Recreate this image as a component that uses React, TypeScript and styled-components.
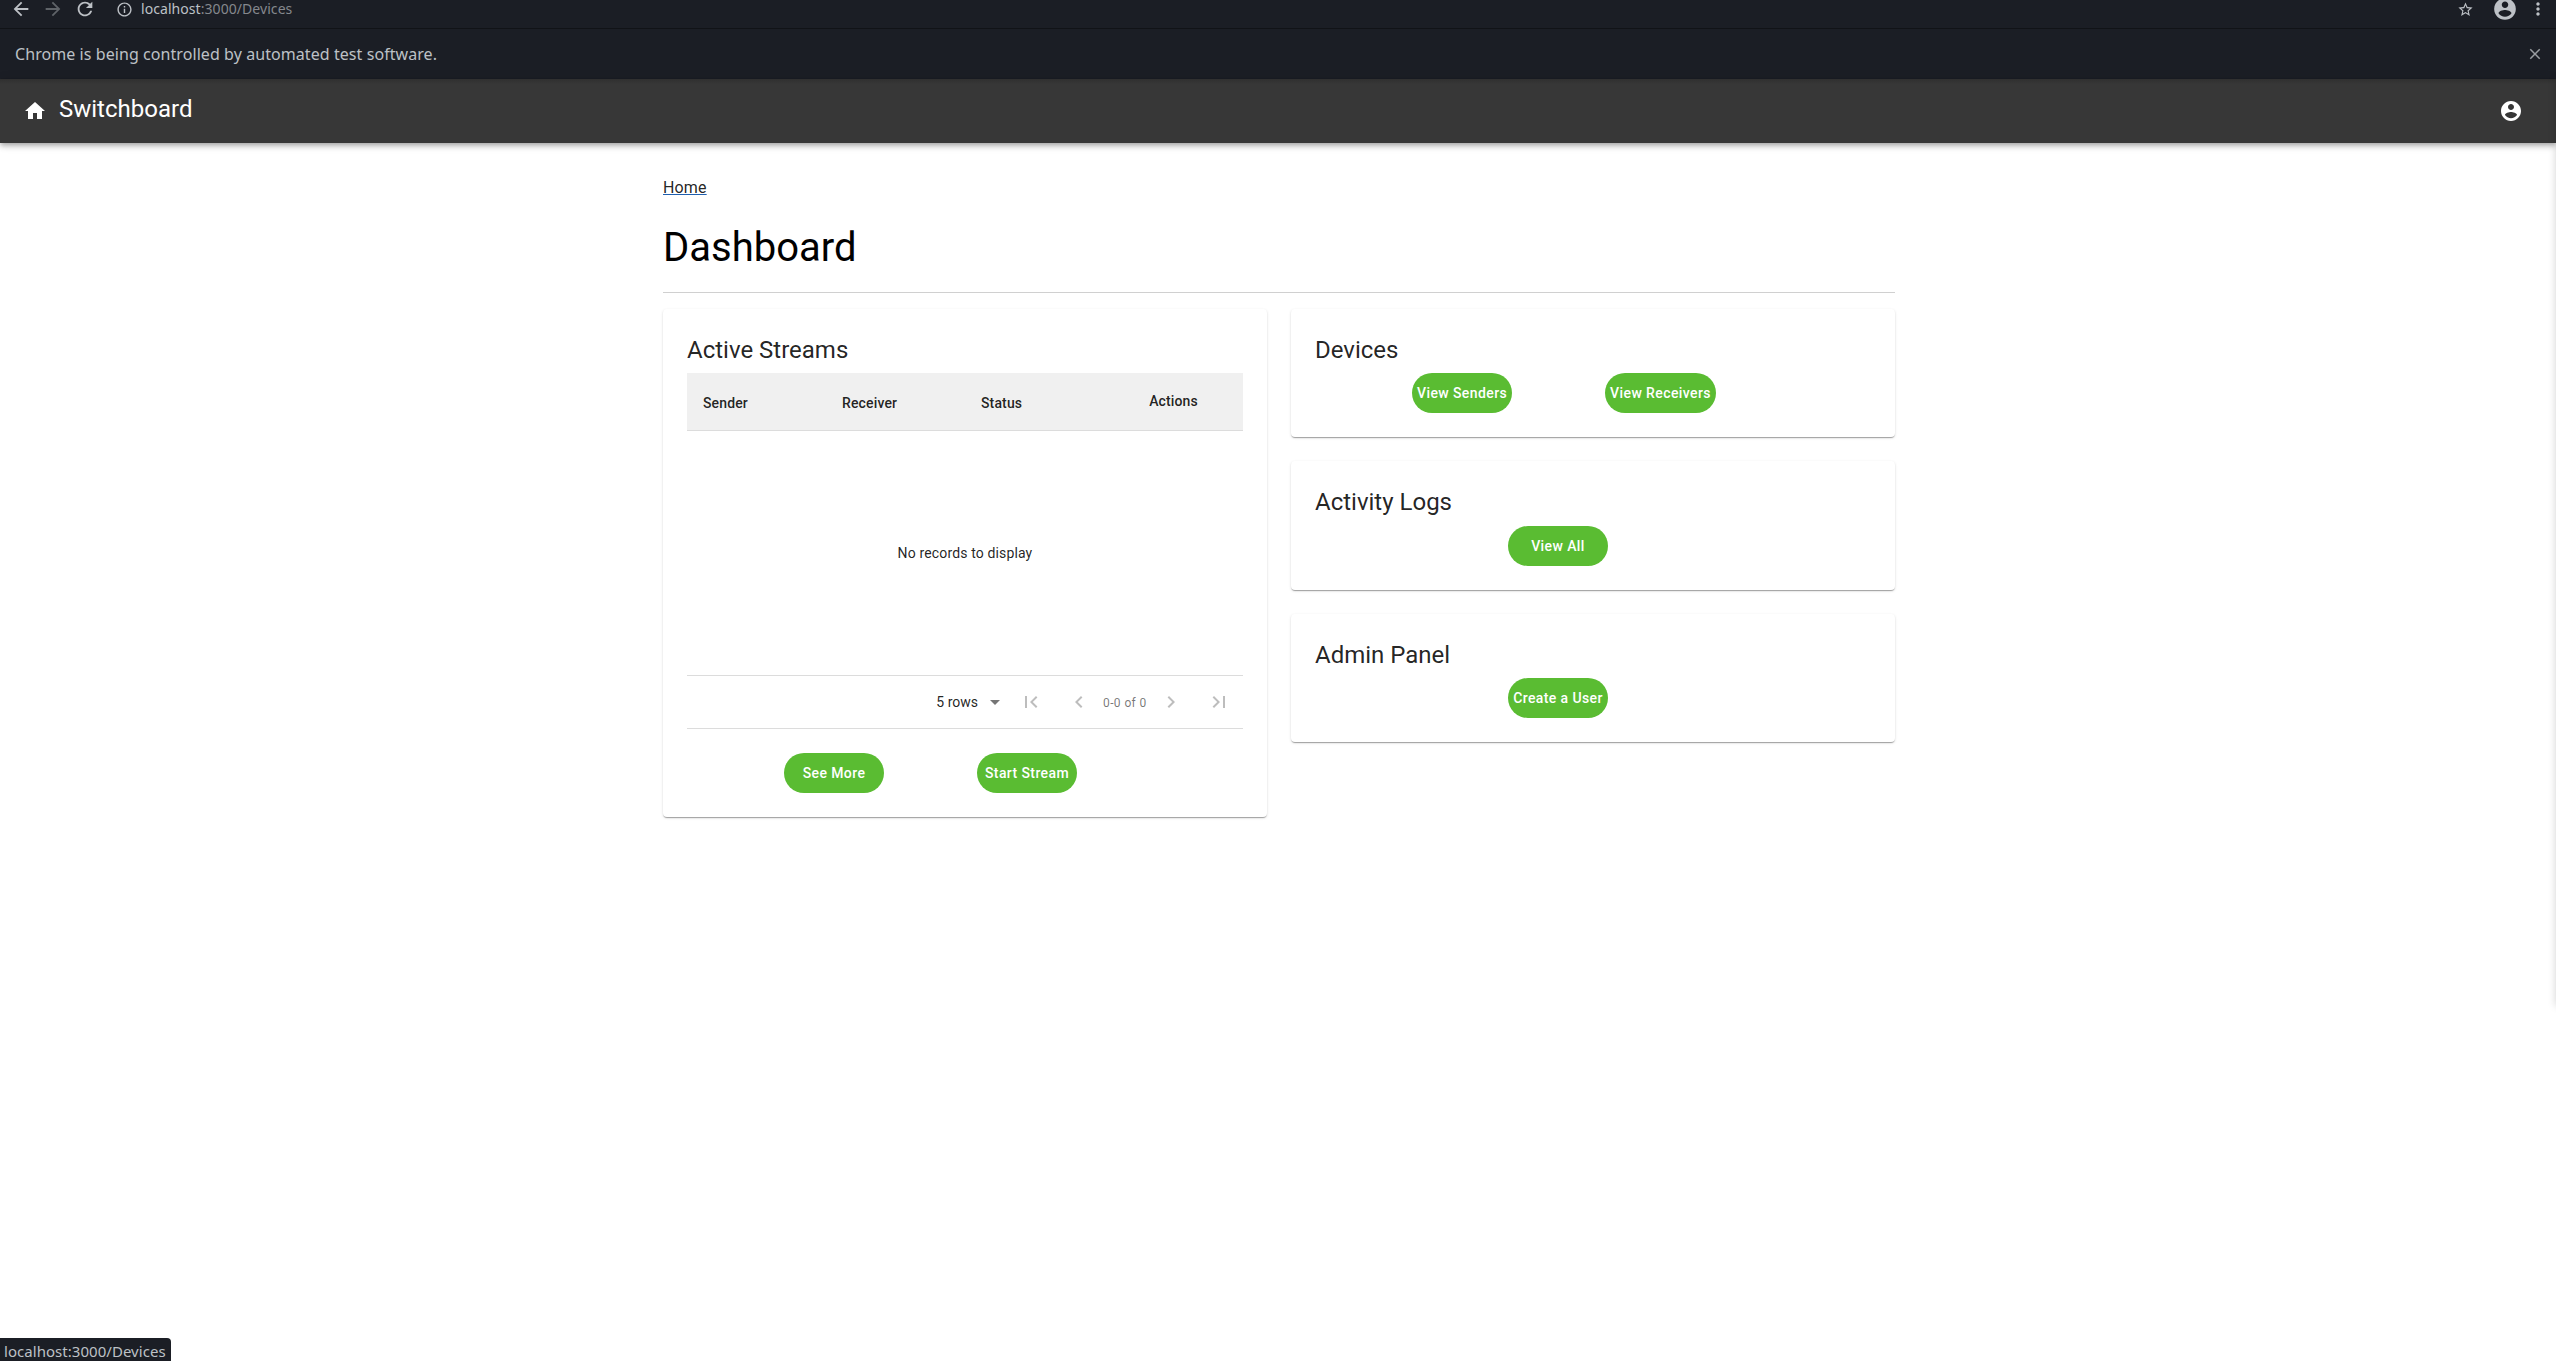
import React from 'react';
import styled, { createGlobalStyle } from 'styled-components';

const GlobalStyle = createGlobalStyle`
  *, *::before, *::after { box-sizing: border-box; }
  html, body { margin: 0; padding: 0; background: #fff; }
  body { font-family: Roboto, "Liberation Sans", sans-serif; overflow: hidden; }
`;

const Window = styled.div`
  position: relative;
  display: flex;
  flex-direction: column;
  height: 1361px;
  overflow: hidden;
`;

const Toolbar = styled.div`
  display: flex;
  align-items: center;
  height: 28px;
  padding: 0 13px 10px 10px;
  background: #1b1e25;
  color: #bdc1c6;
  font-family: "Noto Sans", sans-serif;
`;

const ToolbarIcon = styled.svg<{ $size: number; $gap?: number; $dim?: boolean }>`
  flex: none;
  width: ${p => p.$size}px;
  height: ${p => p.$size}px;
  margin-right: ${p => p.$gap ?? 0}px;
  fill: ${p => (p.$dim ? '#5f6368' : 'currentColor')};
  overflow: visible;
`;

const Url = styled.div`
  flex: 1;
  font-size: 14px;
  line-height: 18px;
  letter-spacing: 0.06px;
  color: #85888d;
`;

const Host = styled.span`
  color: #bdc1c6;
`;

const InfoBar = styled.div`
  display: flex;
  align-items: center;
  justify-content: space-between;
  height: 51px;
  padding: 0 12px 0 15px;
  border-top: 1px solid #111317;
  background: #1b1e25;
  color: #bdc1c6;
  font: 16px/22px "Noto Sans", sans-serif;
  letter-spacing: 0.07px;
`;

const CloseIcon = styled.svg`
  width: 18px;
  height: 18px;
  fill: #9a9da1;
`;

const AppBar = styled.header`
  position: relative;
  display: flex;
  align-items: center;
  height: 64px;
  flex: none;
  padding: 0 33px 0 23px;
  background: linear-gradient(#2f2f2f, #373737 5px);
  color: #fff;
  box-shadow: 0 2px 4px -1px rgba(0, 0, 0, 0.2), 0 4px 5px 0 rgba(0, 0, 0, 0.14),
    0 1px 10px 0 rgba(0, 0, 0, 0.12);
`;

const Brand = styled.div`
  flex: 1;
  padding: 0 0 4px 12px;
  font-size: 24px;
  line-height: 32px;
`;

const Icon = styled.svg<{ $color?: string }>`
  flex: none;
  display: block;
  width: 24px;
  height: 24px;
  fill: ${p => p.$color ?? 'currentColor'};
`;

const Container = styled.main`
  width: 1232px;
  margin: 0 0 0 663px;
  padding-top: 33px;
`;

const Breadcrumb = styled.a`
  display: block;
  width: max-content;
  font-size: 16px;
  line-height: 24px;
  letter-spacing: 0.15px;
  color: rgba(0, 0, 0, 0.87);
  text-decoration: underline;
  text-decoration-color: #1f5fae;
`;

const PageTitle = styled.h1`
  height: 93px;
  margin: 0 0 16px;
  padding-top: 24px;
  border-bottom: 1px solid #d0d0d0;
  font-size: 40px;
  font-weight: 400;
  line-height: 48px;
  color: #000;
`;

const Columns = styled.div`
  display: grid;
  grid-template-columns: 604px 604px;
  gap: 24px;
  align-items: start;
`;

const Stack = styled.div`
  display: flex;
  flex-direction: column;
  gap: 24px;
`;

const Card = styled.section<{ $height: number }>`
  height: ${p => p.$height}px;
  padding: 24px;
  border-radius: 4px;
  background: #fff;
  color: rgba(0, 0, 0, 0.87);
  box-shadow: 0 2px 1px -1px rgba(0, 0, 0, 0.2), 0 1px 1px 0 rgba(0, 0, 0, 0.14),
    0 1px 3px 0 rgba(0, 0, 0, 0.12);
`;

const CardTitle = styled.h2`
  margin: 0;
  height: 40.1px;
  font-size: 24px;
  font-weight: 400;
  line-height: 34px;
`;

const HeaderRow = styled.div`
  display: grid;
  grid-template-columns: repeat(4, 1fr);
  height: 58px;
  border-bottom: 1px solid #dcdcdc;
  background: #f0f0f0;
`;

const HeaderCell = styled.div<{ $center?: boolean }>`
  padding: 0 16px;
  font-size: 14px;
  font-weight: 500;
  line-height: ${p => (p.$center ? 56 : 60)}px;
  letter-spacing: 0.14px;
  text-align: ${p => (p.$center ? 'center' : 'left')};
`;

const EmptyBody = styled.div`
  display: flex;
  align-items: center;
  justify-content: center;
  height: 244px;
  font-size: 14px;
  letter-spacing: 0.14px;
`;

const Pagination = styled.div`
  display: flex;
  align-items: center;
  justify-content: flex-end;
  height: 54px;
  border-top: 1px solid #dcdcdc;
  border-bottom: 1px solid #dcdcdc;
  font-size: 14px;
`;

const RowsSelect = styled.div`
  display: flex;
  align-items: center;
  gap: 5px;
`;

const PageButton = styled.button`
  width: 48px;
  height: 48px;
  padding: 12px;
  border: 0;
  background: none;
  color: rgba(0, 0, 0, 0.26);
`;

const PageRange = styled.span`
  width: 44px;
  padding-top: 2px;
  font-size: 12px;
  letter-spacing: 0.4px;
  white-space: nowrap;
  color: rgba(0, 0, 0, 0.54);
`;

const Actions = styled.div<{ $inset: number; $top?: number }>`
  display: flex;
  gap: 93px;
  padding: ${p => p.$top ?? 0}px 0 0 ${p => p.$inset}px;
`;

const PillButton = styled.button`
  min-width: 100px;
  height: 40px;
  padding: 0 5px;
  border: 0;
  border-radius: 20px;
  background: #5abc32;
  color: #fff;
  font: 500 14px/24px Roboto, "Liberation Sans", sans-serif;
  letter-spacing: 0.4px;
  white-space: nowrap;
`;

const EdgeShadow = styled.div`
  position: absolute;
  top: 79px;
  right: -10px;
  width: 10px;
  height: 927px;
  box-shadow: 0 0 8px rgba(0, 0, 0, 0.18);
`;

const StatusBubble = styled.div`
  position: absolute;
  left: 0;
  bottom: 0;
  width: 171px;
  height: 23px;
  padding-left: 4px;
  border-top-right-radius: 4px;
  background: #1b1e25;
  color: #bdc1c6;
  font: 15px/27px "Noto Sans", sans-serif;
  letter-spacing: 0.04px;
  white-space: nowrap;
`;

const ACCOUNT =
  'M12 2C6.48 2 2 6.48 2 12s4.48 10 10 10 10-4.48 10-10S17.52 2 12 2zm0 3c1.66 0 3 1.34 3 3s-1.34 3-3 3-3-1.34-3-3 1.34-3 3-3zm0 14.2c-2.5 0-4.71-1.28-6-3.22.03-1.99 4-3.08 6-3.08 1.99 0 5.97 1.09 6 3.08-1.29 1.94-3.5 3.22-6 3.22z';

const PATHS = {
  back: 'M20 11H7.83l5.59-5.59L12 4l-8 8 8 8 1.41-1.41L7.83 13H20v-2z',
  forward: 'M12 4l-1.41 1.41L16.17 11H4v2h12.17l-5.58 5.59L12 20l8-8z',
  reload:
    'M17.65 6.35C16.2 4.9 14.21 4 12 4c-4.42 0-7.99 3.58-7.99 8s3.57 8 7.99 8c3.73 0 6.84-2.55 7.73-6h-2.08c-.82 2.33-3.04 4-5.65 4-3.31 0-6-2.69-6-6s2.69-6 6-6c1.66 0 3.14.69 4.22 1.78L13 11h7V4l-2.35 2.35z',
  info: 'M11 7h2v2h-2zm0 4h2v6h-2zm1-9C6.48 2 2 6.48 2 12s4.48 10 10 10 10-4.48 10-10S17.52 2 12 2zm0 18c-4.41 0-8-3.59-8-8s3.59-8 8-8 8 3.59 8 8-3.59 8-8 8z',
  star: 'M22 9.24l-7.19-.62L12 2 9.19 8.63 2 9.24l5.46 4.73L5.82 21 12 17.27 18.18 21l-1.63-7.03L22 9.24zM12 15.4l-3.76 2.27 1-4.28-3.32-2.88 4.38-.38L12 6.1l1.71 4.04 4.38.38-3.32 2.88 1 4.28L12 15.4z',
  more: 'M12 8c1.1 0 2-.9 2-2s-.9-2-2-2-2 .9-2 2 .9 2 2 2zm0 2c-1.1 0-2 .9-2 2s.9 2 2 2 2-.9 2-2-.9-2-2-2zm0 6c-1.1 0-2 .9-2 2s.9 2 2 2 2-.9 2-2-.9-2-2-2z',
  close:
    'M19 6.41L17.59 5 12 10.59 6.41 5 5 6.41 10.59 12 5 17.59 6.41 19 12 13.41 17.59 19 19 17.59 13.41 12z',
  home: 'M10 20v-6h4v6h5v-8h3L12 3 2 12h3v8z',
  dropdown: 'M7 10l5 5 5-5z',
  first: 'M18.41 16.59L13.82 12l4.59-4.59L17 6l-6 6 6 6zM6 6h2v12H6z',
  prev: 'M15.41 7.41L14 6l-6 6 6 6 1.41-1.41L10.83 12z',
  next: 'M10 6L8.59 7.41 13.17 12l-4.58 4.59L10 18l6-6z',
  last: 'M5.59 7.41L10.18 12l-4.59 4.59L7 18l6-6-6-6zM16 6h2v12h-2z',
};

const Glyph = ({ d, color }: { d: string; color?: string }) => (
  <Icon viewBox="0 0 24 24" $color={color}>
    <path d={d} />
  </Icon>
);

const BarGlyph = ({ d, size, gap, dim }: { d: string; size: number; gap?: number; dim?: boolean }) => (
  <ToolbarIcon viewBox="0 0 24 24" $size={size} $gap={gap} $dim={dim}>
    <path d={d} />
  </ToolbarIcon>
);

export default function App() {
  return (
    <Window>
      <GlobalStyle />
      <Toolbar>
        <BarGlyph d={PATHS.back} size={22} gap={10} />
        <BarGlyph d={PATHS.forward} size={22} gap={10} dim />
        <BarGlyph d={PATHS.reload} size={22} gap={20} />
        <BarGlyph d={PATHS.info} size={17} gap={8} />
        <Url>
          <Host>localhost</Host>:3000/Devices
        </Url>
        <BarGlyph d={PATHS.star} size={17} gap={18} />
        <BarGlyph d={ACCOUNT} size={26} gap={10} />
        <BarGlyph d={PATHS.more} size={20} gap={-5} />
      </Toolbar>
      <InfoBar>
        Chrome is being controlled by automated test software.
        <CloseIcon viewBox="0 0 24 24">
          <path d={PATHS.close} />
        </CloseIcon>
      </InfoBar>
      <AppBar>
        <Glyph d={PATHS.home} />
        <Brand>Switchboard</Brand>
        <Glyph d={ACCOUNT} />
      </AppBar>
      <Container>
        <Breadcrumb>Home</Breadcrumb>
        <PageTitle>Dashboard</PageTitle>
        <Columns>
          <Card $height={508}>
            <CardTitle>Active Streams</CardTitle>
            <HeaderRow>
              <HeaderCell>Sender</HeaderCell>
              <HeaderCell>Receiver</HeaderCell>
              <HeaderCell>Status</HeaderCell>
              <HeaderCell $center>Actions</HeaderCell>
            </HeaderRow>
            <EmptyBody>No records to display</EmptyBody>
            <Pagination>
              <RowsSelect>
                5 rows
                <Glyph d={PATHS.dropdown} color="rgba(0,0,0,0.54)" />
              </RowsSelect>
              <PageButton>
                <Glyph d={PATHS.first} />
              </PageButton>
              <PageButton>
                <Glyph d={PATHS.prev} />
              </PageButton>
              <PageRange>0-0 of 0</PageRange>
              <PageButton>
                <Glyph d={PATHS.next} />
              </PageButton>
              <PageButton>
                <Glyph d={PATHS.last} />
              </PageButton>
            </Pagination>
            <Actions $inset={97} $top={24}>
              <PillButton>See More</PillButton>
              <PillButton>Start Stream</PillButton>
            </Actions>
          </Card>
          <Stack>
            <Card $height={128.45}>
              <CardTitle>Devices</CardTitle>
              <Actions $inset={97}>
                <PillButton>View Senders</PillButton>
                <PillButton>View Receivers</PillButton>
              </Actions>
            </Card>
            <Card $height={128.45}>
              <CardTitle>Activity Logs</CardTitle>
              <Actions $inset={193}>
                <PillButton>View All</PillButton>
              </Actions>
            </Card>
            <Card $height={128.45}>
              <CardTitle>Admin Panel</CardTitle>
              <Actions $inset={193}>
                <PillButton>Create a User</PillButton>
              </Actions>
            </Card>
          </Stack>
        </Columns>
      </Container>
      <EdgeShadow />
      <StatusBubble>localhost:3000/Devices</StatusBubble>
    </Window>
  );
}
